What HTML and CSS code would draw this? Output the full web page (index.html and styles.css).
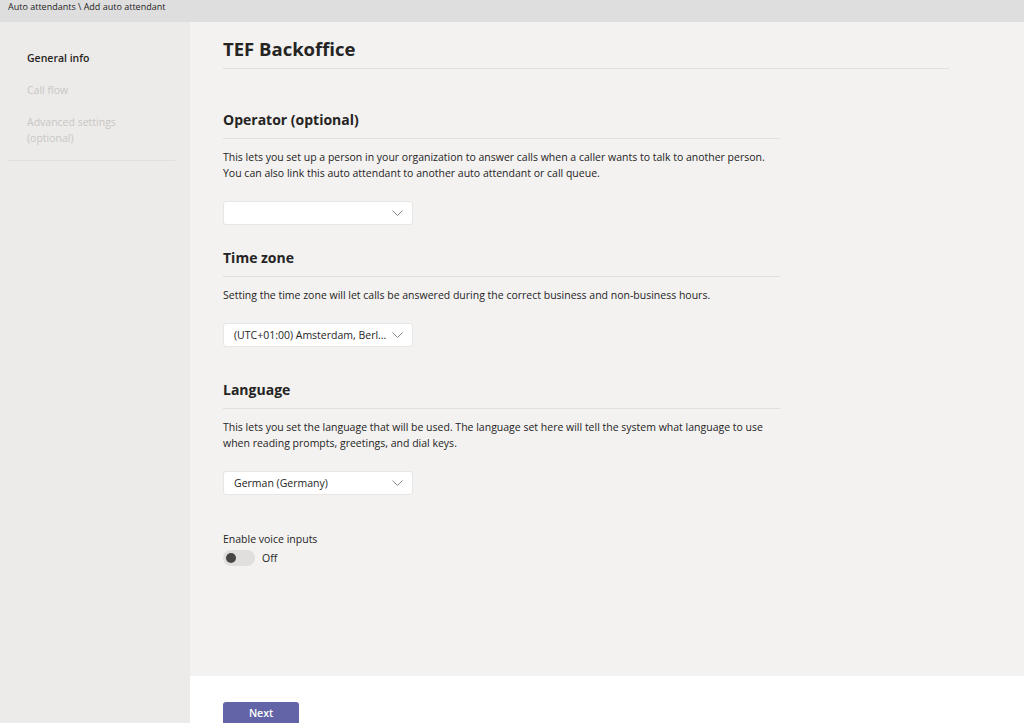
FILE: index.html
```html
<!DOCTYPE html>
<html lang="en">
<head>
    <meta charset="UTF-8">
    <title>Add auto attendant</title>
    <link rel="stylesheet" href="styles.css">
</head>
<body>
<div class="topBar">Auto attendants \ Add auto attendant</div>
<div class="page">
    <div class="sideNav">
        <ul class="steps">
            <li class="step active">General info</li>
            <li class="step">Call flow</li>
            <li class="step">Advanced settings<br>(optional)</li>
        </ul>
    </div>
    <div class="main">
        <div class="content">
            <h1 class="title">TEF Backoffice</h1>

            <div class="section operator">
                <h2 class="sectionTitle">Operator (optional)</h2>
                <p class="desc">This lets you set up a person in your organization to answer calls when a caller wants to talk to another person. You can also link this auto attendant to another auto attendant or call queue.</p>
                <div class="dropdown">
                    <span class="dropdownText"></span>
                    <svg class="chevron" width="11" height="6" viewBox="0 0 11 6"><path d="M0.5 0.5 L5.5 5.5 L10.5 0.5" fill="none" stroke="#8a8886" stroke-width="1"/></svg>
                </div>
            </div>

            <div class="section timezone">
                <h2 class="sectionTitle">Time zone</h2>
                <p class="desc">Setting the time zone will let calls be answered during the correct business and non-business hours.</p>
                <div class="dropdown">
                    <span class="dropdownText">(UTC+01:00) Amsterdam, Berl...</span>
                    <svg class="chevron" width="11" height="6" viewBox="0 0 11 6"><path d="M0.5 0.5 L5.5 5.5 L10.5 0.5" fill="none" stroke="#8a8886" stroke-width="1"/></svg>
                </div>
            </div>

            <div class="section language">
                <h2 class="sectionTitle">Language</h2>
                <p class="desc">This lets you set the language that will be used. The language set here will tell the system what language to use when reading prompts, greetings, and dial keys.</p>
                <div class="dropdown">
                    <span class="dropdownText">German (Germany)</span>
                    <svg class="chevron" width="11" height="6" viewBox="0 0 11 6"><path d="M0.5 0.5 L5.5 5.5 L10.5 0.5" fill="none" stroke="#8a8886" stroke-width="1"/></svg>
                </div>
            </div>

            <div class="voice">
                <div class="voiceLabel">Enable voice inputs</div>
                <div class="toggleRow">
                    <span class="toggle"><span class="knob"></span></span>
                    <span class="toggleText">Off</span>
                </div>
            </div>
        </div>
        <div class="footer">
            <button class="nextBtn">Next</button>
        </div>
    </div>
</div>
</body>
</html>
```

FILE: styles.css
```css
html, body {
    margin: 0;
    padding: 0;
    height: 723px;
    overflow: hidden;
}

body {
    font-family: "Open Sans", "Noto Sans", "Liberation Sans", sans-serif;
    color: #252423;
    background: #f3f2f1;
    display: flex;
    flex-direction: column;
}

.topBar {
    height: 22px;
    line-height: 13px;
    padding: 0 8px;
    background: #dedede;
    font-size: 9px;
    color: #252423;
    flex-shrink: 0;
}

.page {
    flex: 1;
    display: flex;
    min-height: 0;
}

/* left step list */
.sideNav {
    width: 190px;
    background: #edebe9;
    flex-shrink: 0;
}

.steps {
    list-style: none;
    margin: 0 15px 0 8px;
    padding: 28px 0 14px;
    border-bottom: 1px solid #e1dfdd;
}

.step {
    padding-left: 19px;
    font-size: 10.5px;
    line-height: 16px;
    color: #c8c6c4;
    margin-bottom: 16px;
}

.step:last-child {
    margin-bottom: 0;
}

.step.active {
    color: #252423;
    font-weight: 600;
}

/* main form */
.main {
    flex: 1;
    display: flex;
    flex-direction: column;
}

.content {
    flex: 1;
    padding: 0 75px 0 33px;
}

.title {
    margin: 0;
    padding: 14px 0 6px;
    font-size: 18.5px;
    line-height: 26px;
    font-weight: 700;
    border-bottom: 1px solid #e1dfdd;
}

.section {
    width: 557px;
}

.operator {
    margin-top: 41px;
}

.timezone {
    margin-top: 23px;
}

.language {
    margin-top: 33px;
}

.sectionTitle {
    margin: 0;
    padding-bottom: 8px;
    font-size: 14px;
    line-height: 20px;
    font-weight: 700;
    border-bottom: 1px solid #e1dfdd;
}

.desc {
    margin: 10px 0 20px;
    font-size: 10.5px;
    line-height: 16px;
}

.dropdown {
    width: 190px;
    height: 24px;
    box-sizing: border-box;
    background: #fff;
    border: 1px solid #e7e6e5;
    border-radius: 3px;
    display: flex;
    align-items: center;
    justify-content: space-between;
    padding: 0 9px 0 10px;
    font-size: 10.5px;
}

.chevron {
    flex-shrink: 0;
}

.voice {
    margin-top: 36px;
}

.voiceLabel {
    font-size: 10.5px;
    line-height: 16px;
}

.toggleRow {
    display: flex;
    align-items: center;
    margin-top: 3px;
}

.toggle {
    width: 32px;
    height: 16px;
    border-radius: 8px;
    background: #e1dfdd;
    display: flex;
    align-items: center;
    padding-left: 3px;
    box-sizing: border-box;
}

.knob {
    width: 10px;
    height: 10px;
    border-radius: 50%;
    background: #484644;
}

.toggleText {
    margin-left: 7px;
    font-size: 10.5px;
}

/* white action bar at the bottom */
.footer {
    height: 47px;
    background: #fff;
    padding: 24px 0 0 33px;
    box-sizing: border-box;
    flex-shrink: 0;
}

.nextBtn {
    width: 76px;
    height: 32px;
    border: none;
    border-radius: 3px;
    background: #6264a7;
    color: #fff;
    font-family: inherit;
    font-size: 10.5px;
    font-weight: 600;
    padding: 0 0 9px;
}
```
